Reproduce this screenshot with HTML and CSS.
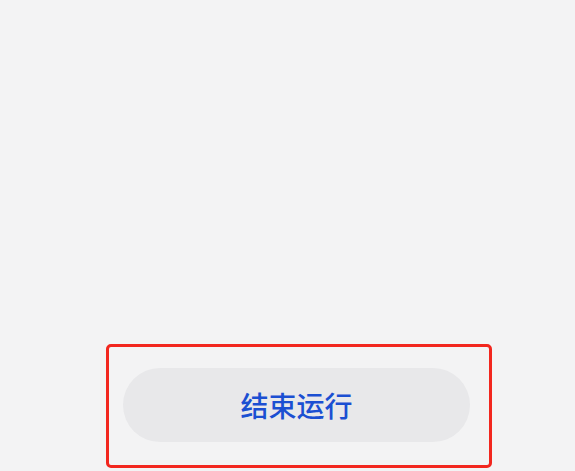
FILE: index.html
```html
<!DOCTYPE html>
<html lang="zh">
<head>
<meta charset="utf-8">
<link rel="stylesheet" href="styles.css">
</head>
<body>
<main class="page">
  <div class="highlight">
    <button class="end-btn">结束运行</button>
  </div>
</main>
</body>
</html>
```

FILE: styles.css
```css
html, body {
  margin: 0;
  padding: 0;
  background: #f3f3f4;
}
.page {
  width: 575px;
  height: 471px;
  display: flex;
  flex-direction: column;
  justify-content: flex-end;
  align-items: flex-start;
  box-sizing: border-box;
  padding: 0 0 3px 106px;
}
.highlight {
  width: 386px;
  height: 124px;
  box-sizing: border-box;
  border: 3px solid #f2261e;
  border-radius: 5px;
  display: flex;
  align-items: center;
  padding-left: 14px;
  padding-bottom: 2px;
}
.end-btn {
  width: 347px;
  height: 74px;
  border: none;
  border-radius: 37px;
  background: #e8e8ea;
  color: #1b4fd2;
  font-family: "Noto Sans CJK SC", sans-serif;
  font-size: 28px;
  font-weight: 500;
  letter-spacing: 0;
  padding: 0;
  margin: 0;
}
```
